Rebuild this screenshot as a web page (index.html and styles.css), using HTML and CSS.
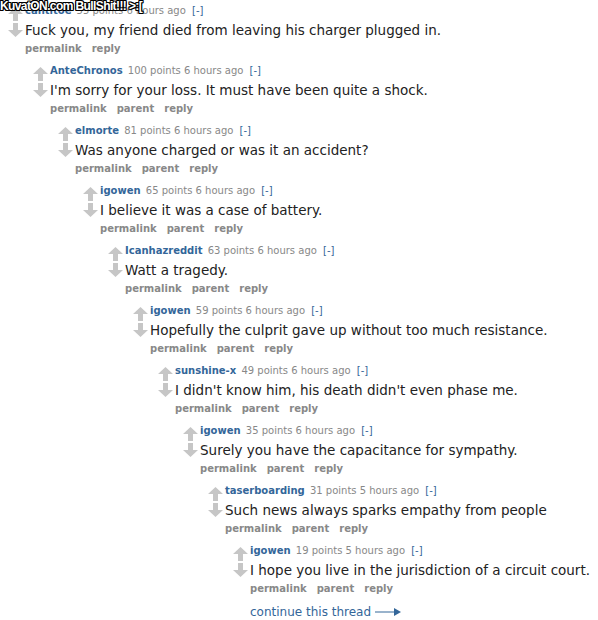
FILE: index.html
```html
<!DOCTYPE html>
<html>
<head>
<meta charset="utf-8">
<link rel="stylesheet" href="styles.css">
</head>
<body>
<div class="watermark">KuvatON.com BullShit!!! &gt;:[</div>
<div class="thread">
  <div class="comment">
    <div class="row">
      <div class="votes">
        <svg class="arrow up" viewBox="0 0 15 14"><path d="M7.5 0 L15 7 L10 7 L10 14 L5 14 L5 7 L0 7 Z"/></svg>
        <svg class="arrow down" viewBox="0 0 15 14"><path d="M5 0 L10 0 L10 7 L15 7 L7.5 14 L0 7 L5 7 Z"/></svg>
      </div>
      <div class="entry">
        <p class="tagline"><a class="author">cantitoe</a> 55 points 6 hours ago <a class="expand">[-]</a></p>
        <p class="body">Fuck you, my friend died from leaving his charger plugged in.</p>
        <ul class="buttons"><li>permalink</li><li>reply</li></ul>
      </div>
    </div>
    <div class="child">
      <div class="comment">
        <div class="row">
          <div class="votes">
            <svg class="arrow up" viewBox="0 0 15 14"><path d="M7.5 0 L15 7 L10 7 L10 14 L5 14 L5 7 L0 7 Z"/></svg>
            <svg class="arrow down" viewBox="0 0 15 14"><path d="M5 0 L10 0 L10 7 L15 7 L7.5 14 L0 7 L5 7 Z"/></svg>
          </div>
          <div class="entry">
            <p class="tagline"><a class="author">AnteChronos</a> 100 points 6 hours ago <a class="expand">[-]</a></p>
            <p class="body">I'm sorry for your loss. It must have been quite a shock.</p>
            <ul class="buttons"><li>permalink</li><li>parent</li><li>reply</li></ul>
          </div>
        </div>
        <div class="child">
          <div class="comment">
            <div class="row">
              <div class="votes">
                <svg class="arrow up" viewBox="0 0 15 14"><path d="M7.5 0 L15 7 L10 7 L10 14 L5 14 L5 7 L0 7 Z"/></svg>
                <svg class="arrow down" viewBox="0 0 15 14"><path d="M5 0 L10 0 L10 7 L15 7 L7.5 14 L0 7 L5 7 Z"/></svg>
              </div>
              <div class="entry">
                <p class="tagline"><a class="author">elmorte</a> 81 points 6 hours ago <a class="expand">[-]</a></p>
                <p class="body">Was anyone charged or was it an accident?</p>
                <ul class="buttons"><li>permalink</li><li>parent</li><li>reply</li></ul>
              </div>
            </div>
            <div class="child">
              <div class="comment">
                <div class="row">
                  <div class="votes">
                    <svg class="arrow up" viewBox="0 0 15 14"><path d="M7.5 0 L15 7 L10 7 L10 14 L5 14 L5 7 L0 7 Z"/></svg>
                    <svg class="arrow down" viewBox="0 0 15 14"><path d="M5 0 L10 0 L10 7 L15 7 L7.5 14 L0 7 L5 7 Z"/></svg>
                  </div>
                  <div class="entry">
                    <p class="tagline"><a class="author">igowen</a> 65 points 6 hours ago <a class="expand">[-]</a></p>
                    <p class="body">I believe it was a case of battery.</p>
                    <ul class="buttons"><li>permalink</li><li>parent</li><li>reply</li></ul>
                  </div>
                </div>
                <div class="child">
                  <div class="comment">
                    <div class="row">
                      <div class="votes">
                        <svg class="arrow up" viewBox="0 0 15 14"><path d="M7.5 0 L15 7 L10 7 L10 14 L5 14 L5 7 L0 7 Z"/></svg>
                        <svg class="arrow down" viewBox="0 0 15 14"><path d="M5 0 L10 0 L10 7 L15 7 L7.5 14 L0 7 L5 7 Z"/></svg>
                      </div>
                      <div class="entry">
                        <p class="tagline"><a class="author">Icanhazreddit</a> 63 points 6 hours ago <a class="expand">[-]</a></p>
                        <p class="body">Watt a tragedy.</p>
                        <ul class="buttons"><li>permalink</li><li>parent</li><li>reply</li></ul>
                      </div>
                    </div>
                    <div class="child">
                      <div class="comment">
                        <div class="row">
                          <div class="votes">
                            <svg class="arrow up" viewBox="0 0 15 14"><path d="M7.5 0 L15 7 L10 7 L10 14 L5 14 L5 7 L0 7 Z"/></svg>
                            <svg class="arrow down" viewBox="0 0 15 14"><path d="M5 0 L10 0 L10 7 L15 7 L7.5 14 L0 7 L5 7 Z"/></svg>
                          </div>
                          <div class="entry">
                            <p class="tagline"><a class="author">igowen</a> 59 points 6 hours ago <a class="expand">[-]</a></p>
                            <p class="body">Hopefully the culprit gave up without too much resistance.</p>
                            <ul class="buttons"><li>permalink</li><li>parent</li><li>reply</li></ul>
                          </div>
                        </div>
                        <div class="child">
                          <div class="comment">
                            <div class="row">
                              <div class="votes">
                                <svg class="arrow up" viewBox="0 0 15 14"><path d="M7.5 0 L15 7 L10 7 L10 14 L5 14 L5 7 L0 7 Z"/></svg>
                                <svg class="arrow down" viewBox="0 0 15 14"><path d="M5 0 L10 0 L10 7 L15 7 L7.5 14 L0 7 L5 7 Z"/></svg>
                              </div>
                              <div class="entry">
                                <p class="tagline"><a class="author">sunshine-x</a> 49 points 6 hours ago <a class="expand">[-]</a></p>
                                <p class="body">I didn't know him, his death didn't even phase me.</p>
                                <ul class="buttons"><li>permalink</li><li>parent</li><li>reply</li></ul>
                              </div>
                            </div>
                            <div class="child">
                              <div class="comment">
                                <div class="row">
                                  <div class="votes">
                                    <svg class="arrow up" viewBox="0 0 15 14"><path d="M7.5 0 L15 7 L10 7 L10 14 L5 14 L5 7 L0 7 Z"/></svg>
                                    <svg class="arrow down" viewBox="0 0 15 14"><path d="M5 0 L10 0 L10 7 L15 7 L7.5 14 L0 7 L5 7 Z"/></svg>
                                  </div>
                                  <div class="entry">
                                    <p class="tagline"><a class="author">igowen</a> 35 points 6 hours ago <a class="expand">[-]</a></p>
                                    <p class="body">Surely you have the capacitance for sympathy.</p>
                                    <ul class="buttons"><li>permalink</li><li>parent</li><li>reply</li></ul>
                                  </div>
                                </div>
                                <div class="child">
                                  <div class="comment">
                                    <div class="row">
                                      <div class="votes">
                                        <svg class="arrow up" viewBox="0 0 15 14"><path d="M7.5 0 L15 7 L10 7 L10 14 L5 14 L5 7 L0 7 Z"/></svg>
                                        <svg class="arrow down" viewBox="0 0 15 14"><path d="M5 0 L10 0 L10 7 L15 7 L7.5 14 L0 7 L5 7 Z"/></svg>
                                      </div>
                                      <div class="entry">
                                        <p class="tagline"><a class="author">taserboarding</a> 31 points 5 hours ago <a class="expand">[-]</a></p>
                                        <p class="body">Such news always sparks empathy from people</p>
                                        <ul class="buttons"><li>permalink</li><li>parent</li><li>reply</li></ul>
                                      </div>
                                    </div>
                                    <div class="child">
                                      <div class="comment">
                                        <div class="row last">
                                          <div class="votes">
                                            <svg class="arrow up" viewBox="0 0 15 14"><path d="M7.5 0 L15 7 L10 7 L10 14 L5 14 L5 7 L0 7 Z"/></svg>
                                            <svg class="arrow down" viewBox="0 0 15 14"><path d="M5 0 L10 0 L10 7 L15 7 L7.5 14 L0 7 L5 7 Z"/></svg>
                                          </div>
                                          <div class="entry">
                                            <p class="tagline"><a class="author">igowen</a> 19 points 5 hours ago <a class="expand">[-]</a></p>
                                            <p class="body">I hope you live in the jurisdiction of a circuit court.</p>
                                            <ul class="buttons"><li>permalink</li><li>parent</li><li>reply</li></ul>
                                            <a class="more">continue this thread <svg class="more-arrow" viewBox="0 0 26 10"><path d="M0 4.5 H20 V5.5 H0 Z"/><path d="M19 1 L26 5 L19 9 Z"/></svg></a>
                                          </div>
                                        </div>
                                      </div>
                                    </div>
                                  </div>
                                </div>
                              </div>
                            </div>
                          </div>
                        </div>
                      </div>
                    </div>
                  </div>
                </div>
              </div>
            </div>
          </div>
        </div>
      </div>
    </div>
  </div>
</div>
</body>
</html>
```
FILE: styles.css
```css
html, body {
  margin: 0;
  padding: 0;
  background: #fff;
}
body {
  font-family: "DejaVu Sans", Verdana, sans-serif;
  font-size: 10px;
  color: #222;
}
.watermark {
  position: absolute;
  left: 0;
  top: 0;
  font-family: "Liberation Sans", Arial, sans-serif;
  font-size: 12px;
  font-weight: bold;
  line-height: 12px;
  letter-spacing: -0.6px;
  color: #fff;
  text-shadow: 1px 0 0 #000, -1px 0 0 #000, 0 1px 0 #000, 0 -1px 0 #000,
    1px 1px 0 #000, -1px -1px 0 #000, 1px -1px 0 #000, -1px 1px 0 #000;
  z-index: 2;
}
.thread {
  padding-left: 8px;
}
.child {
  margin-left: 25px;
}
.row {
  display: flex;
  min-height: 60px;
  box-sizing: border-box;
  padding-top: 4px;
}
.votes {
  width: 15px;
  margin-right: 2px;
  display: flex;
  flex-direction: column;
  padding-top: 3px;
}
.arrow {
  width: 15px;
  height: 14px;
  display: block;
  fill: #c6c6c6;
}
.arrow.down {
  margin-top: 2px;
}
.entry {
  flex: 1;
  white-space: nowrap;
}
.tagline {
  margin: 0;
  height: 14px;
  line-height: 14px;
  font-size: 10px;
  color: #888;
}
.author {
  color: #369;
  font-weight: bold;
  margin-right: 2px;
}
.expand {
  color: #369;
  margin-left: 3px;
}
.body {
  margin: 3px 0 0;
  line-height: 18px;
  height: 18px;
  font-size: 13.5px;
  color: #222;
}
.buttons {
  list-style: none;
  margin: 3px 0 0;
  padding: 0;
  display: flex;
  gap: 10px;
  line-height: 14px;
  font-size: 10px;
  font-weight: bold;
  color: #888;
}
.more {
  display: flex;
  align-items: center;
  gap: 4px;
  margin-top: 9px;
  font-size: 12px;
  line-height: 14px;
  color: #369;
}
.more-arrow {
  width: 26px;
  height: 10px;
  fill: #369;
}
```
